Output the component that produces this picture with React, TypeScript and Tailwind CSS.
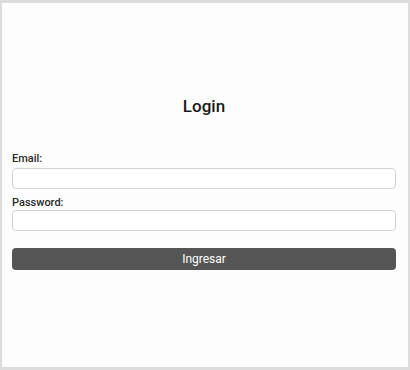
export default function App() {
  return (
    <div
      className="w-[410px] h-[370px] border-x-2 border-y-[3px] border-[#dcdcdc] bg-[#fdfdfd]"
      style={{ fontFamily: "Roboto, 'Liberation Sans', sans-serif" }}
    >
      <div className="flex flex-col pl-[10px] pr-[12px] pt-[91px]">
        <h1 className="text-center text-[17px] leading-[24px] font-medium text-[#1a1a1a]">
          Login
        </h1>
        <form className="mt-[34px] flex flex-col">
          <label className="text-[11px] leading-[14px] font-medium text-[#2a2a2a] mb-[2px]">
            Email:
          </label>
          <input
            type="email"
            className="h-[21px] rounded-[4px] border border-[#d2d2d2] bg-white px-2 text-[12px] outline-none"
          />
          <label className="mt-[7px] text-[11px] leading-[14px] font-medium text-[#2a2a2a]">
            Password:
          </label>
          <input
            type="password"
            className="h-[21px] rounded-[4px] border border-[#d2d2d2] bg-white px-2 text-[12px] outline-none"
          />
          <button
            type="button"
            className="mt-[17px] h-[22px] rounded-[4px] bg-[#555555] text-[12px] text-white"
          >
            Ingresar
          </button>
        </form>
      </div>
    </div>
  );
}
